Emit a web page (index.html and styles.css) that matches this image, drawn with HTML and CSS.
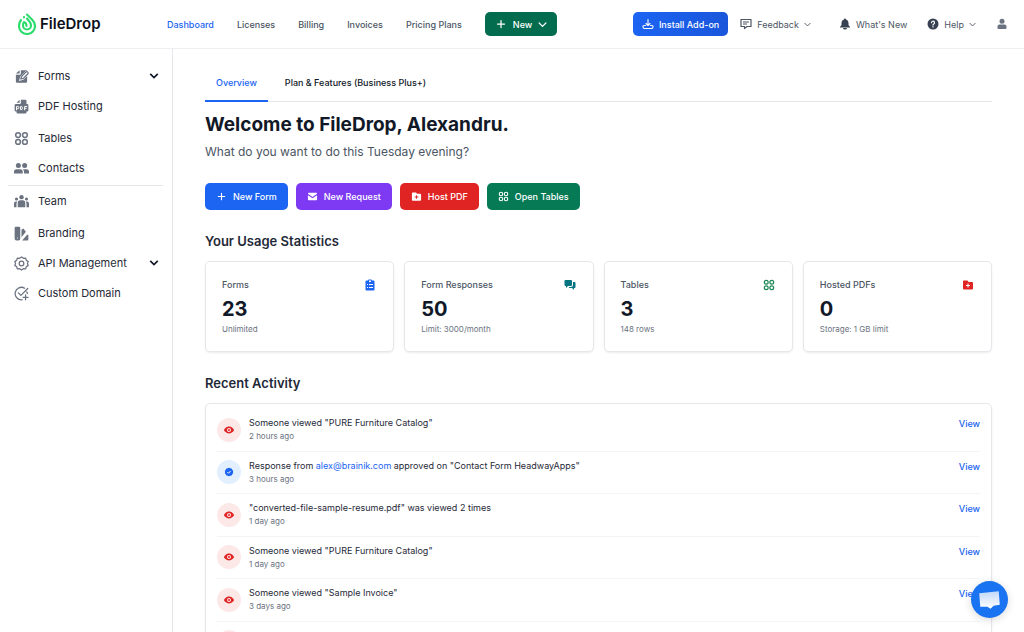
FILE: index.html
```html
<!DOCTYPE html>
<html lang="en">
<head>
    <meta charset="UTF-8">
    <meta name="viewport" content="width=device-width, initial-scale=1.0">
    <title>FileDrop - Dashboard</title>
    <link rel="stylesheet" href="styles.css">
</head>
<body>
    <!-- Shared icons -->
    <svg class="sprite" aria-hidden="true">
        <symbol id="plus" viewBox="0 0 24 24"><path d="M12 5v14M5 12h14" fill="none" stroke="currentColor" stroke-width="2.500" stroke-linecap="round"/></symbol>
        <symbol id="chevron" viewBox="0 0 24 24"><path d="M3 8l9 9 9-9" fill="none" stroke="currentColor" stroke-width="3.200" stroke-linecap="round" stroke-linejoin="round"/></symbol>
        <symbol id="chevron-bold" viewBox="0 0 24 24"><path d="M3 7l9 9 9-9" fill="none" stroke="currentColor" stroke-width="4"/></symbol>
        <symbol id="grid" viewBox="0 0 24 24"><g fill="none" stroke="currentColor" stroke-width="2.4"><circle cx="6.5" cy="6.5" r="3.8"/><circle cx="17.5" cy="6.5" r="3.8"/><circle cx="6.5" cy="17.5" r="3.8"/><circle cx="17.5" cy="17.5" r="3.8"/></g></symbol>
        <symbol id="folder" viewBox="0 0 24 24"><path fill="currentColor" fill-rule="evenodd" d="M4 3a2 2 0 0 0-2 2v14a2 2 0 0 0 2 2h16a2 2 0 0 0 2-2V8a2 2 0 0 0-2-2h-7l-2-3H4Zm7 6h2v3h3v2h-3v3h-2v-3H8v-2h3V9Z"/></symbol>
        <symbol id="eye" viewBox="0 0 24 24"><path fill="currentColor" fill-rule="evenodd" d="M5 7.800C6.700 6.300 9.200 5 12 5s5.300 1.300 7 2.800c1.700 1.400 3 3.200 3 4.200s-1.300 2.800-3 4.200C17.300 17.700 14.800 19 12 19s-5.300-1.300-7-2.800C3.300 14.800 2 13 2 12s1.300-2.800 3-4.200ZM12 16a4 4 0 1 0 0-8 4 4 0 0 0 0 8Zm0-2a2 2 0 1 1 0-4 2 2 0 0 1 0 4Z"/></symbol>
        <symbol id="badge" viewBox="0 0 24 24"><path fill="currentColor" d="M12 2l3 1.200 3.300.300 1.500 2.900L22 9l-.500 3 .500 3-2.200 2.600-1.500 2.900-3.300.300L12 22l-3-1.200-3.300-.300-1.500-2.900L2 15l.500-3L2 9l2.200-2.600 1.500-2.900L9 3.200z"/><path d="M8 12l3 3 5-5.500" fill="none" stroke="#fff" stroke-width="2.200"/></symbol>
    </svg>

    <header class="topbar">
        <a class="logo" href="#">
            <svg viewBox="0 0 36 44" aria-hidden="true">
                <g fill="none" stroke="#2bdc6c" stroke-width="4.200" stroke-linecap="round" stroke-linejoin="round">
                    <path d="M18 3l10 10c4 4 6 8 6 13a16 16 0 0 1-32 0c0-5 1-8 4-12"/>
                    <path d="M18 11l4 5c3 3 4 6 4 9a8 8 0 0 1-16 0c0-3 0-5 2-7 3 1 5 3 5 8"/>
                    <path d="M12 8v1"/>
                </g>
            </svg>
            <span>FileDrop</span>
        </a>
        <nav class="main-nav" aria-label="Main">
            <a class="active" href="#">Dashboard</a>
            <a href="#">Licenses</a>
            <a href="#">Billing</a>
            <a href="#">Invoices</a>
            <a href="#">Pricing Plans</a>
            <button class="btn btn-new" type="button">
                <svg class="icon-12"><use href="#plus"/></svg>
                New
                <svg class="icon-9"><use href="#chevron"/></svg>
            </button>
        </nav>
        <div class="actions">
            <button class="btn btn-install" type="button">
                <svg class="icon-12" viewBox="0 0 24 24"><g fill="none" stroke="currentColor" stroke-width="2.200" stroke-linecap="round" stroke-linejoin="round"><path d="M12 3v12M8 11l4 4 4-4M7 15H4a2 2 0 0 0-2 2v1a3 3 0 0 0 3 3h14a3 3 0 0 0 3-3v-1a2 2 0 0 0-2-2h-3"/></g></svg>
                Install Add-on
            </button>
            <button class="link-btn feedback" type="button">
                <svg class="icon-12" viewBox="0 0 24 24"><g fill="none" stroke="currentColor" stroke-width="2.400" stroke-linejoin="round"><path d="M2 3h20v14h-8l-5 4v-4H2zM6 8h12M6 12h8"/></g></svg>
                Feedback
                <svg class="icon-7"><use href="#chevron"/></svg>
            </button>
            <button class="link-btn news" type="button">
                <svg class="icon-12" viewBox="0 0 24 24"><path fill="currentColor" d="M12 1a2 2 0 0 0-2 2c-3.500 1-5 4-5 7v4l-3 4v1h20v-1l-3-4v-4c0-3-1.500-6-5-7a2 2 0 0 0-2-2zM8 20h8a4 3 0 0 1-8 0z"/></svg>
                What's New
            </button>
            <button class="link-btn help" type="button">
                <svg class="icon-12" viewBox="0 0 24 24"><circle cx="12" cy="12" r="11" fill="currentColor"/><path d="M9 9.500a3 3 0 1 1 4.500 2.500c-1 .600-1.500 1-1.500 2.200M12 17v1" fill="none" stroke="#fff" stroke-width="2.400" stroke-linecap="round"/></svg>
                Help
                <svg class="icon-7"><use href="#chevron"/></svg>
            </button>
            <button class="link-btn user" type="button" aria-label="Account">
                <svg class="icon-12" viewBox="0 0 24 24"><circle cx="12" cy="6.500" r="5" fill="currentColor"/><path fill="currentColor" d="M7 13h10a4 4 0 0 1 4 4v3a2 2 0 0 1-2 2H5a2 2 0 0 1-2-2v-3a4 4 0 0 1 4-4z"/></svg>
            </button>
        </div>
    </header>

    <div class="layout">
        <aside class="sidebar">
            <ul>
                <li><a href="#">
                    <svg viewBox="0 0 24 24"><path fill="currentColor" fill-rule="evenodd" d="M9 2v5H3l6-5zM11 2h8a2 2 0 0 1 2 1l-2 0-9 9-2 7 7-2 6-6v9a2 2 0 0 1-2 2H5a2 2 0 0 1-2-2V9h6a2 2 0 0 0 2-2V2z"/><path d="M11 16l1-4 7-7a2 2 0 0 1 3 3l-7 7z" fill="#fff" stroke="currentColor" stroke-width="2" stroke-linejoin="round"/></svg>
                    Forms
                    <svg class="caret"><use href="#chevron-bold"/></svg>
                </a></li>
                <li><a href="#">
                    <svg viewBox="0 0 24 24"><path fill="currentColor" d="M9 1v5H4l5-5zm2 0h7a2 2 0 0 1 2 2v5h1a2 2 0 0 1 2 2v8a2 2 0 0 1-2 2h-1v1a2 2 0 0 1-2 2H6a2 2 0 0 1-2-2v-1H3a2 2 0 0 1-2-2v-8a2 2 0 0 1 2-2h6a2 2 0 0 0 2-2V1z"/><path d="M4 18v-6h2a1.500 1.500 0 0 1 0 3.500H4M10.500 12v5h1a2 2 0 0 0 2-2v-1a2 2 0 0 0-2-2zM17 18v-6h4M17 15h3" fill="none" stroke="#fff" stroke-width="1.600"/></svg>
                    PDF Hosting
                </a></li>
            </ul>
            <ul>
                <li><a href="#"><svg><use href="#grid"/></svg>Tables</a></li>
                <li><a href="#">
                    <svg viewBox="0 0 24 24"><g fill="currentColor"><circle cx="7" cy="7" r="4"/><circle cx="17" cy="7" r="4"/><path d="M4 13h6a4 4 0 0 1 4 4v3H0v-3a4 4 0 0 1 4-4zM14 13h6a4 4 0 0 1 4 4v3h-8v-3a6 6 0 0 0-2-4z"/></g></svg>
                    Contacts
                </a></li>
            </ul>
            <ul class="divided">
                <li><a href="#">
                    <svg viewBox="0 0 24 24"><g fill="currentColor"><circle cx="12" cy="5" r="3.500"/><circle cx="4" cy="8" r="2.500"/><circle cx="20" cy="8" r="2.500"/><path d="M10 10h4a4 4 0 0 1 4 4v7H6v-7a4 4 0 0 1 4-4zM3 12h2l-1 3v6H0v-6a3 3 0 0 1 3-3zM21 12h-2l1 3v6h4v-6a3 3 0 0 0-3-3z"/></g></svg>
                    Team
                </a></li>
            </ul>
            <ul>
                <li><a href="#">
                    <svg viewBox="0 0 24 24"><path fill="currentColor" fill-rule="evenodd" d="M3 1h5a2 2 0 0 1 2 2v17a3 3 0 0 1-3 3H4a3 3 0 0 1-3-3V3a2 2 0 0 1 2-2zm2 17v2h1v-2H5zM12 6l3-2 4 5-7 9V6zM14 22l7-8h1a1 1 0 0 1 1 1v6a2 2 0 0 1-2 2h-8z"/></svg>
                    Branding
                </a></li>
                <li><a href="#">
                    <svg viewBox="0 0 24 24"><g fill="none" stroke="currentColor" stroke-width="2" stroke-linejoin="round"><path d="M12 1.500l3 2.200 3.700-.400 1 3.600 3 2.100-1.200 3 1.200 3-3 2.100-1 3.600-3.700-.400-3 2.200-3-2.200-3.700.400-1-3.600-3-2.100 1.200-3-1.200-3 3-2.100 1-3.600 3.700.400z"/><circle cx="12" cy="12" r="3.700"/></g></svg>
                    API Management
                    <svg class="caret"><use href="#chevron-bold"/></svg>
                </a></li>
                <li><a href="#">
                    <svg viewBox="0 0 24 24"><path d="M17 3.500A10 10 0 1 0 13 22M7 11l4 4L22 4M18.500 14v8M14.500 18h8M20.500 9.500l1 2.500" fill="none" stroke="currentColor" stroke-width="2" stroke-linecap="round" stroke-linejoin="round"/></svg>
                    Custom Domain
                </a></li>
            </ul>
        </aside>

        <main class="content">
            <div class="tabs" role="tablist">
                <button class="tab selected" type="button" role="tab" aria-selected="true">Overview</button>
                <button class="tab" type="button" role="tab" aria-selected="false">Plan &amp; Features (Business Plus+)</button>
            </div>

            <h1>Welcome to FileDrop, Alexandru.</h1>
            <p class="subtitle">What do you want to do this Tuesday evening?</p>

            <div class="quick-actions">
                <button class="btn blue" type="button"><svg class="icon-11"><use href="#plus"/></svg>New Form</button>
                <button class="btn purple" type="button">
                    <svg class="icon-11" viewBox="0 0 24 24"><path fill="currentColor" d="M4 4h16a2 2 0 0 1 2 2l-10 7L2 6a2 2 0 0 1 2-2zM2 9l10 7 10-7v9a2 2 0 0 1-2 2H4a2 2 0 0 1-2-2z"/></svg>New Request</button>
                <button class="btn red" type="button"><svg class="icon-11"><use href="#folder"/></svg>Host PDF</button>
                <button class="btn green" type="button"><svg class="icon-11"><use href="#grid"/></svg>Open Tables</button>
            </div>

            <h2>Your Usage Statistics</h2>
            <div class="stats">
                <div class="card">
                    <div class="card-head">Forms
                        <svg class="icon-12 c-blue" viewBox="0 0 24 24"><path fill="currentColor" fill-rule="evenodd" d="M8 3a2 2 0 0 1 2-2h4a2 2 0 0 1 2 2h3a2 2 0 0 1 2 2v16a2 2 0 0 1-2 2H5a2 2 0 0 1-2-2V5a2 2 0 0 1 2-2h3zm2 0v3h4V3h-4zM6 10v2h2v-2H6zm4 0v2h8v-2h-8zm-4 6v2h2v-2H6zm4 0v2h8v-2h-8z"/></svg>
                    </div>
                    <div class="number">23</div>
                    <div class="note">Unlimited</div>
                </div>
                <div class="card">
                    <div class="card-head">Form Responses
                        <svg class="icon-12 c-teal" viewBox="0 0 24 24"><path fill="currentColor" d="M3 2h11a2 2 0 0 1 2 2v8a2 2 0 0 1-2 2H8l-4 4v-4H3a2 2 0 0 1-2-2V4a2 2 0 0 1 2-2zM18 6h3a2 2 0 0 1 2 2v8a2 2 0 0 1-2 2h-1v4l-4-4h-5l-2-2h5a4 4 0 0 0 4-4z"/></svg>
                    </div>
                    <div class="number">50</div>
                    <div class="note">Limit: 3000/month</div>
                </div>
                <div class="card">
                    <div class="card-head">Tables <svg class="icon-12 c-green"><use href="#grid"/></svg></div>
                    <div class="number">3</div>
                    <div class="note">148 rows</div>
                </div>
                <div class="card">
                    <div class="card-head">Hosted PDFs <svg class="icon-12 c-red"><use href="#folder"/></svg></div>
                    <div class="number">0</div>
                    <div class="note">Storage: 1 GB limit</div>
                </div>
            </div>

            <h2>Recent Activity</h2>
            <ul class="activity">
                <li>
                    <span class="avatar"><svg class="icon-12"><use href="#eye"/></svg></span>
                    <div class="event"><p>Someone viewed "PURE Furniture Catalog"</p><time>2 hours ago</time></div>
                    <a class="view" href="#">View</a>
                </li>
                <li>
                    <span class="avatar info"><svg class="icon-10"><use href="#badge"/></svg></span>
                    <div class="event"><p>Response from <a href="#">alex@brainik.com</a> approved on "Contact Form HeadwayApps"</p><time>3 hours ago</time></div>
                    <a class="view" href="#">View</a>
                </li>
                <li>
                    <span class="avatar"><svg class="icon-12"><use href="#eye"/></svg></span>
                    <div class="event"><p>"converted-file-sample-resume.pdf" was viewed 2 times</p><time>1 day ago</time></div>
                    <a class="view" href="#">View</a>
                </li>
                <li>
                    <span class="avatar"><svg class="icon-12"><use href="#eye"/></svg></span>
                    <div class="event"><p>Someone viewed "PURE Furniture Catalog"</p><time>1 day ago</time></div>
                    <a class="view" href="#">View</a>
                </li>
                <li>
                    <span class="avatar"><svg class="icon-12"><use href="#eye"/></svg></span>
                    <div class="event"><p>Someone viewed "Sample Invoice"</p><time>3 days ago</time></div>
                    <a class="view" href="#">View</a>
                </li>
                <li>
                    <span class="avatar"></span>
                </li>
            </ul>
        </main>
    </div>

    <button class="chat" type="button" aria-label="Open chat">
        <svg viewBox="0 0 36 36">
            <defs><linearGradient id="bubble" x1="0" y1="0" x2="0" y2="1"><stop offset="0" stop-color="#c3d8fc"/><stop offset="1" stop-color="#fff"/></linearGradient></defs>
            <path d="M8 12l19-2 1 13-6 1-3 3-3-2-7 0z" fill="url(#bubble)"/>
        </svg>
    </button>
</body>
</html>
```
FILE: styles.css
```css
* {
    box-sizing: border-box;
}
body {
    margin: 0;
    font-family: Inter, "Liberation Sans", sans-serif;
    font-size: 9px;
    line-height: 13px;
    color: #1f2937;
    background: #fff;
}
a {
    color: inherit;
    text-decoration: none;
}
button {
    font: inherit;
    color: inherit;
    background: none;
    border: none;
    padding: 0;
    cursor: pointer;
}
ul {
    list-style: none;
    margin: 0;
    padding: 0;
}
h1, h2, p {
    margin: 0;
}
svg {
    flex: none;
}
.sprite {
    display: none;
}
.icon-7 { width: 7px; height: 7px; }
.icon-9 { width: 9px; height: 9px; }
.icon-10 { width: 10px; height: 10px; }
.icon-11 { width: 11px; height: 11px; }
.icon-12 { width: 12px; height: 12px; }
.c-blue { color: #1c64f2; }
.c-teal { color: #047481; }
.c-green { color: #198754; }
.c-red { color: #e02424; }

/* Top bar */
.topbar {
    display: flex;
    align-items: center;
    height: 49px;
    padding: 0 16px 0 18px;
    border-bottom: 1px solid #eceef1;
}
.logo {
    display: flex;
    align-items: center;
    gap: 4px;
    width: 149px;
    font-size: 15px;
    font-weight: 600;
    line-height: 24px;
    color: #0b0f19;
}
.logo svg {
    width: 18px;
    height: 22px;
}
.main-nav {
    display: flex;
    align-items: center;
    gap: 23px;
    font-weight: 500;
    color: #4b5563;
}
.main-nav .active {
    color: #1c64f2;
}
.btn {
    display: flex;
    align-items: center;
    justify-content: center;
    height: 24px;
    border-radius: 5px;
    color: #fff;
    font-weight: 500;
}
.btn-new {
    gap: 6px;
    padding: 0 10px;
    background: #046c4e;
}
.actions {
    display: flex;
    align-items: center;
    margin-left: auto;
}
.btn-install {
    gap: 5px;
    padding: 0 9px;
    background: linear-gradient(90deg, #1c64f2, #1a56db);
}
.link-btn {
    display: flex;
    align-items: center;
    gap: 5px;
    color: #4b5563;
}
.feedback { margin-left: 12px; }
.news { margin-left: 28px; }
.help { margin-left: 20px; }
.user { margin-left: 20px; color: #6b7280; }
.news svg,
.help .icon-12 {
    color: #374151;
}

/* Sidebar */
.layout {
    display: flex;
}
.sidebar {
    width: 173px;
    padding: 12px 9px 0 8px;
    border-right: 1px solid #e5e7eb;
    font-size: 11px;
    color: #1f2937;
}
.sidebar ul {
    margin-bottom: 2px;
}
.sidebar .divided {
    border-top: 1px solid #e5e7eb;
}
.sidebar a {
    display: flex;
    align-items: center;
    gap: 9px;
    height: 30px;
    padding: 0 4px 0 6px;
}
.sidebar svg {
    width: 15px;
    height: 15px;
    color: #6b7280;
}
.sidebar .caret {
    width: 10px;
    height: 10px;
    margin-left: auto;
    color: #111827;
}

/* Content */
.content {
    flex: 1;
    min-width: 0;
    padding: 16px 32px;
}
.tabs {
    display: flex;
    gap: 6px;
    border-bottom: 1px solid #e5e7eb;
}
.tab {
    height: 37px;
    margin-bottom: -1px;
    padding: 0 11px;
    border-bottom: 2px solid transparent;
    font-weight: 500;
    color: #111827;
}
.tab.selected {
    border-color: #1c64f2;
    color: #1c64f2;
}
h1 {
    margin-top: 9px;
    font-size: 19px;
    font-weight: 700;
    line-height: 28px;
    color: #111827;
}
.subtitle {
    margin-top: 3px;
    font-size: 12px;
    line-height: 20px;
    color: #4b5563;
}
.quick-actions {
    display: flex;
    gap: 8px;
    margin: 21px 0;
}
.quick-actions .btn {
    gap: 6px;
    height: 27px;
    padding: 0 11px;
}
.blue { background: #1c64f2; }
.purple { background: #7e3af2; }
.red { background: #e02424; }
.green { background: #057a55; }
h2 {
    font-size: 13px;
    font-weight: 600;
    line-height: 20px;
    color: #1f2937;
}
.stats {
    display: grid;
    grid-template-columns: repeat(4, 1fr);
    gap: 10px;
    margin: 10px 0 21px;
}
.card,
.activity {
    border: 1px solid #e5e7eb;
    border-radius: 5px;
    box-shadow: 0 1px 2px rgba(0, 0, 0, 0.08);
}
.card {
    padding: 16px 17px 16px 16px;
}
.card-head {
    display: flex;
    align-items: center;
    justify-content: space-between;
    font-weight: 500;
    color: #4b5563;
}
.number {
    font-size: 20px;
    font-weight: 700;
    line-height: 24px;
    margin: 6px 0 2px;
    color: #111827;
}
.note,
time {
    font-size: 8px;
    line-height: 12px;
    color: #6b7280;
}

/* Recent activity */
.activity {
    display: grid;
    grid-auto-rows: 1fr;
    min-height: 262px;
    margin-top: 10px;
    padding: 5px 11px 0;
}
.activity li {
    display: flex;
    align-items: center;
    gap: 8px;
    border-bottom: 1px solid #f3f4f6;
}
.avatar {
    display: flex;
    align-items: center;
    justify-content: center;
    width: 24px;
    height: 24px;
    border-radius: 50%;
    background: #fde8e8;
    color: #e02424;
}
.avatar.info {
    background: #e1effe;
    color: #1c64f2;
}
.event {
    flex: 1;
}
.event a,
.view {
    color: #1c64f2;
}
time {
    display: block;
}
.event time {
    line-height: 14px;
}
.view {
    align-self: flex-start;
    margin-top: 8px;
    font-weight: 500;
}

/* Chat launcher */
.chat {
    position: fixed;
    right: 16px;
    bottom: 14px;
    width: 37px;
    height: 37px;
    border-radius: 50%;
    background: #1a73f0;
    box-shadow: 0 2px 8px rgba(0, 0, 0, 0.15);
}
.chat svg {
    display: block;
}
```
